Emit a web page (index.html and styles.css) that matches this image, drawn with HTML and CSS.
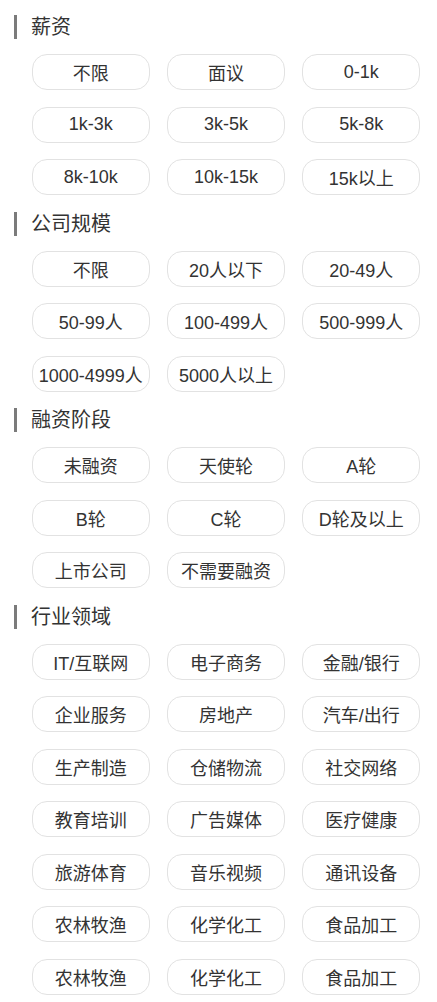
FILE: index.html
```html
<!DOCTYPE html>
<html lang="zh-CN">
<head>
    <meta charset="UTF-8">
    <meta name="viewport" content="width=device-width, initial-scale=1.0">
    <title>筛选</title>
    <link rel="stylesheet" href="styles.css">
</head>
<body>
    <!-- 薪资 -->
    <div class="filter-group">
        <h3 class="filter-title">薪资</h3>
        <div class="filter-options">
            <span class="option">不限</span>
            <span class="option">面议</span>
            <span class="option">0-1k</span>
            <span class="option">1k-3k</span>
            <span class="option">3k-5k</span>
            <span class="option">5k-8k</span>
            <span class="option">8k-10k</span>
            <span class="option">10k-15k</span>
            <span class="option">15k以上</span>
        </div>
    </div>

    <!-- 公司规模 -->
    <div class="filter-group">
        <h3 class="filter-title">公司规模</h3>
        <div class="filter-options">
            <span class="option">不限</span>
            <span class="option">20人以下</span>
            <span class="option">20-49人</span>
            <span class="option">50-99人</span>
            <span class="option">100-499人</span>
            <span class="option">500-999人</span>
            <span class="option">1000-4999人</span>
            <span class="option">5000人以上</span>
        </div>
    </div>

    <!-- 融资阶段 -->
    <div class="filter-group">
        <h3 class="filter-title">融资阶段</h3>
        <div class="filter-options">
            <span class="option">未融资</span>
            <span class="option">天使轮</span>
            <span class="option">A轮</span>
            <span class="option">B轮</span>
            <span class="option">C轮</span>
            <span class="option">D轮及以上</span>
            <span class="option">上市公司</span>
            <span class="option">不需要融资</span>
        </div>
    </div>

    <!-- 行业领域 -->
    <div class="filter-group">
        <h3 class="filter-title">行业领域</h3>
        <div class="filter-options">
            <span class="option">IT/互联网</span>
            <span class="option">电子商务</span>
            <span class="option">金融/银行</span>
            <span class="option">企业服务</span>
            <span class="option">房地产</span>
            <span class="option">汽车/出行</span>
            <span class="option">生产制造</span>
            <span class="option">仓储物流</span>
            <span class="option">社交网络</span>
            <span class="option">教育培训</span>
            <span class="option">广告媒体</span>
            <span class="option">医疗健康</span>
            <span class="option">旅游体育</span>
            <span class="option">音乐视频</span>
            <span class="option">通讯设备</span>
            <span class="option">农林牧渔</span>
            <span class="option">化学化工</span>
            <span class="option">食品加工</span>
            <span class="option">农林牧渔</span>
            <span class="option">化学化工</span>
            <span class="option">食品加工</span>
        </div>
    </div>
</body>
</html>
```

FILE: styles.css
```css
body {
    margin: 0;
    padding-top: 15px;
    background-color: #ffffff;
    color: #333333;
    font-family: "Liberation Sans", "Noto Sans CJK SC", sans-serif;
}

.filter-title {
    margin: 0 0 15px 14px;
    padding-left: 14px;
    height: 24px;
    line-height: 24px;
    border-left: 3px solid #7b7b7b;
    font-size: 20px;
    font-weight: normal;
    color: #333333;
}

.filter-options {
    display: grid;
    grid-template-columns: repeat(3, 1fr);
    column-gap: 16.5px;
    row-gap: 16.5px;
    padding: 0 16.5px 16.5px 31.5px;
}

.option {
    display: flex;
    justify-content: center;
    align-items: center;
    height: 36px;
    box-sizing: border-box;
    border: 1px solid #e2e2e2;
    border-radius: 15px;
    font-size: 18px;
    color: #333333;
    white-space: nowrap;
}
```
